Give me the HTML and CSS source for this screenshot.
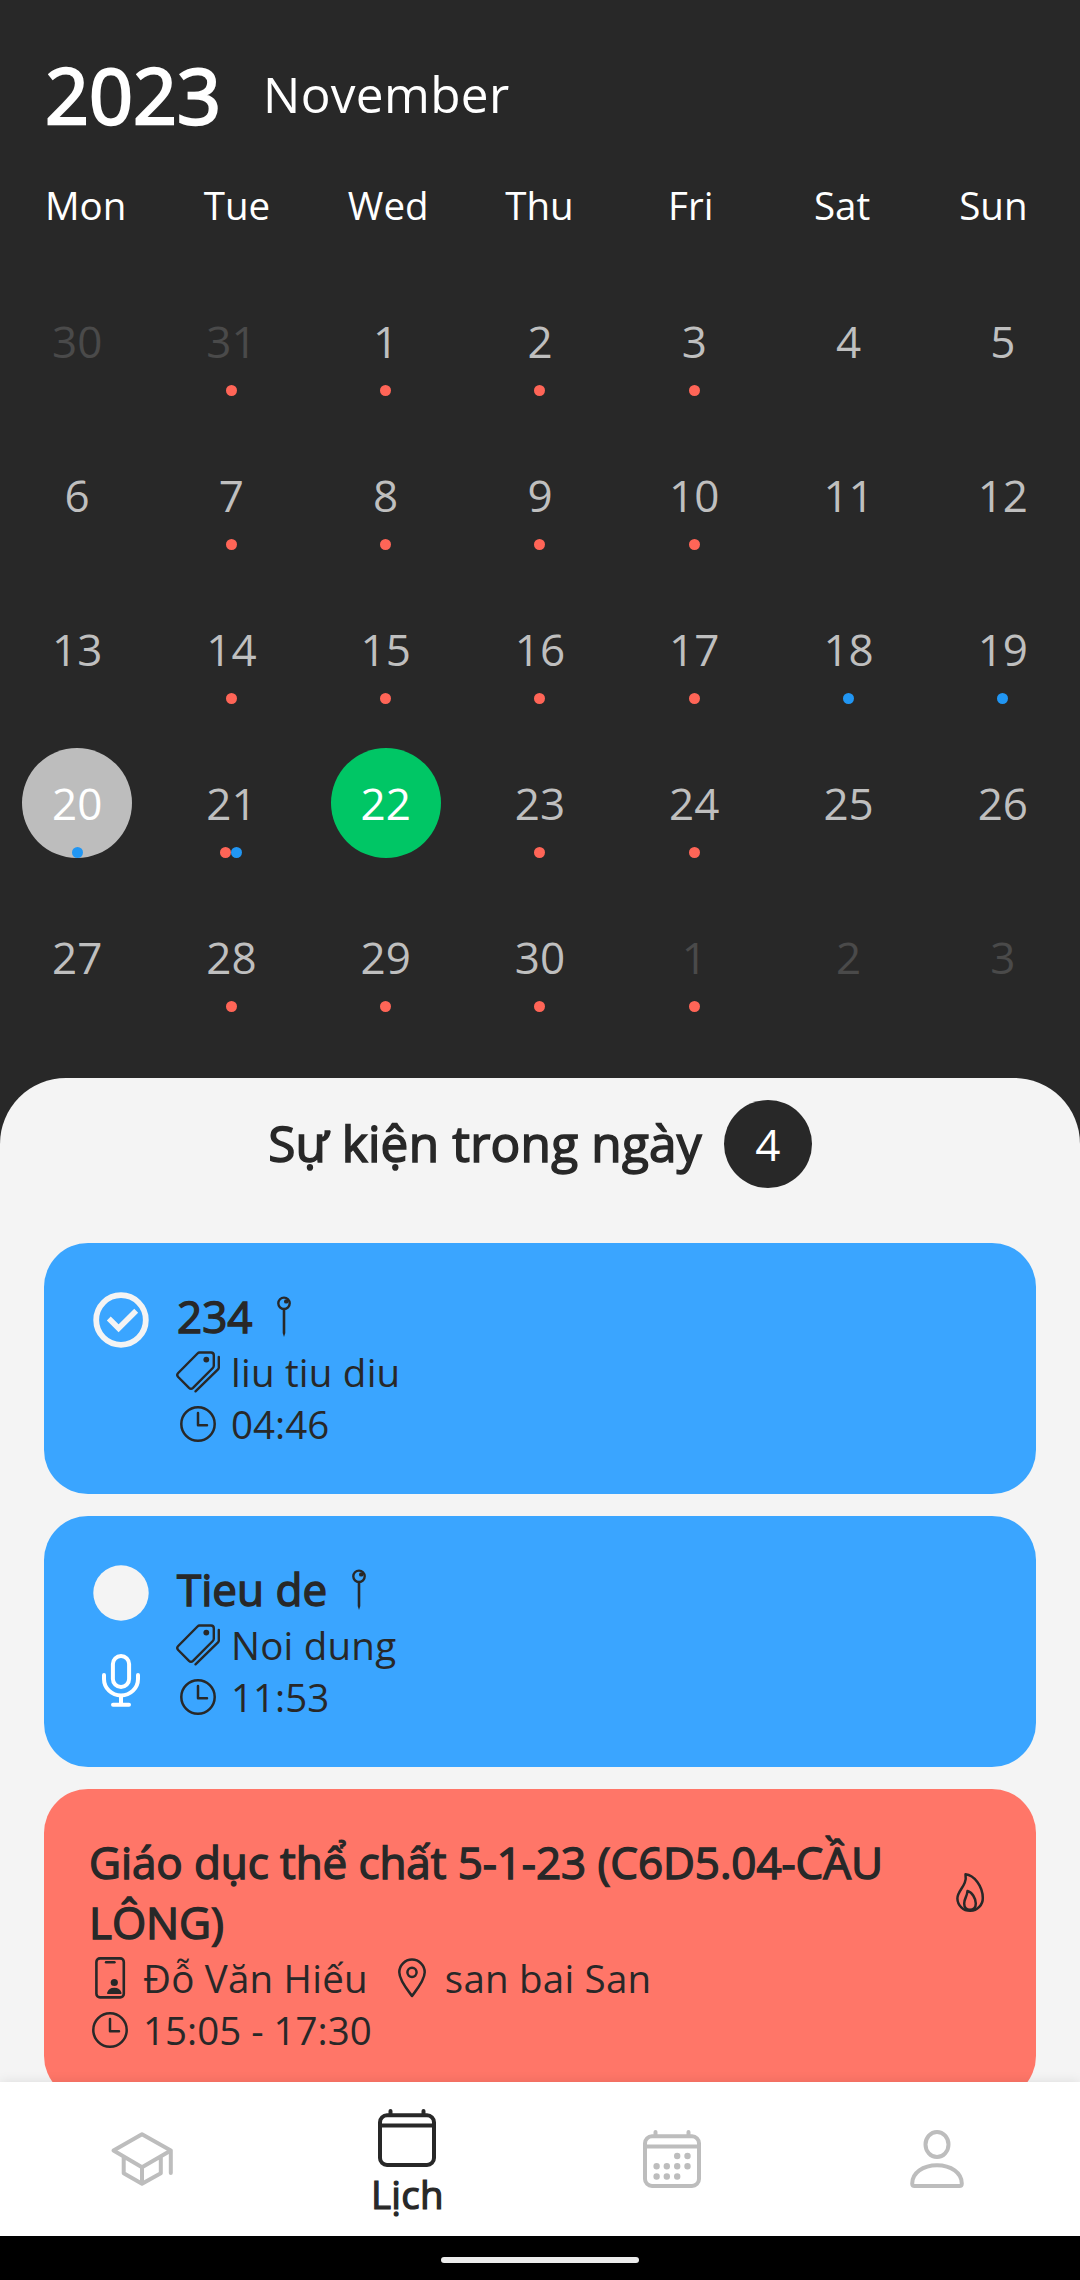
FILE: index.html
```html
<!DOCTYPE html>
<html lang="vi">
<head>
<meta charset="utf-8">
<title>Lịch</title>
<link rel="stylesheet" href="styles.css">
</head>
<body>
<svg class="defs" aria-hidden="true">
  <symbol id="i-pin" viewBox="0 0 44 44">
    <circle cx="22" cy="8.3" r="5.7" fill="none" stroke="currentColor" stroke-width="2.4"/>
    <circle cx="24.2" cy="6.4" r="2.2" fill="currentColor"/>
    <path d="M20.7 14h2.6v24l-1.3 4-1.3-4z" fill="currentColor"/>
  </symbol>
  <symbol id="i-tag" viewBox="0 0 44 44">
    <path d="M23.5 2.5H35Q37.8 2.5 37.8 5.3V15.500Q37.800 17 36.800 18L17 37.800Q15 39.700 13 37.800L2.200 27Q.3 25 2.200 23L21.500 3.500Q22.500 2.500 23.500 2.500Z" fill="none" stroke="currentColor" stroke-width="2.400"/>
    <circle cx="30.300" cy="9.600" r="2.900" fill="currentColor"/>
    <path d="M42.800 7v10.500q0 1-.8 1.800L19.500 41.300" fill="none" stroke="currentColor" stroke-width="2.400" stroke-linecap="round"/>
  </symbol>
  <symbol id="i-clock" viewBox="0 0 44 44">
    <circle cx="22" cy="22" r="16.700" fill="none" stroke="currentColor" stroke-width="2.500"/>
    <path d="M22 11v12.300h9" fill="none" stroke="currentColor" stroke-width="2.500" stroke-linecap="round" stroke-linejoin="round"/>
  </symbol>
  <symbol id="i-lecturer" viewBox="0 0 44 44">
    <rect x="8.400" y="2.400" width="27.400" height="39" rx="3.600" fill="none" stroke="currentColor" stroke-width="2.600"/>
    <path d="M18 6.300h8.500" stroke="currentColor" stroke-width="2.400" stroke-linecap="round"/>
    <circle cx="26.300" cy="26.500" r="3.600" fill="currentColor"/>
    <path d="M19.200 38v-1.500q1.400-4.700 7.100-4.700t7.100 4.700V38z" fill="currentColor"/>
  </symbol>
  <symbol id="i-place" viewBox="0 0 44 44">
    <path d="M22 40C20 37 9.300 25 9.300 16.300a12.700 12.700 0 0 1 25.400 0C34.700 25 24 37 22 40Z" fill="none" stroke="currentColor" stroke-width="2.500" stroke-linejoin="round"/>
    <circle cx="22" cy="16.300" r="4.600" fill="none" stroke="currentColor" stroke-width="2.500"/>
  </symbol>
  <symbol id="i-fire" viewBox="0 0 44 44">
    <path d="M17.500 3.200C26 4 34.800 15 34.800 27A12.700 12.600 0 0 1 9.400 27.500C9.400 19 19.500 15 17.500 3.200Z" fill="none" stroke="currentColor" stroke-width="2.500" stroke-linejoin="round"/>
    <path d="M19.500 20C24 21 27.800 27.500 27.800 32.500C27.800 37 25 38.800 22 38.800S16.200 37 16.200 32.500C16.200 27 19 26.500 19.500 20Z" fill="none" stroke="currentColor" stroke-width="2.500" stroke-linejoin="round"/>
  </symbol>
</svg>

<main class="app">
  <header class="heading">
    <span class="year">2023</span>
    <span class="month">November</span>
  </header>
  <div class="weekdays">
    <span>Mon</span><span>Tue</span><span>Wed</span><span>Thu</span><span>Fri</span><span>Sat</span><span>Sun</span>
  </div>
  <div class="days">
    <div class="day dim">30</div>
    <div class="day dim">31<span class="dots"><i class="dot"></i></span></div>
    <div class="day">1<span class="dots"><i class="dot"></i></span></div>
    <div class="day">2<span class="dots"><i class="dot"></i></span></div>
    <div class="day">3<span class="dots"><i class="dot"></i></span></div>
    <div class="day">4</div>
    <div class="day">5</div>

    <div class="day">6</div>
    <div class="day">7<span class="dots"><i class="dot"></i></span></div>
    <div class="day">8<span class="dots"><i class="dot"></i></span></div>
    <div class="day">9<span class="dots"><i class="dot"></i></span></div>
    <div class="day">10<span class="dots"><i class="dot"></i></span></div>
    <div class="day">11</div>
    <div class="day">12</div>

    <div class="day">13</div>
    <div class="day">14<span class="dots"><i class="dot"></i></span></div>
    <div class="day">15<span class="dots"><i class="dot"></i></span></div>
    <div class="day">16<span class="dots"><i class="dot"></i></span></div>
    <div class="day">17<span class="dots"><i class="dot"></i></span></div>
    <div class="day">18<span class="dots"><i class="dot note"></i></span></div>
    <div class="day">19<span class="dots"><i class="dot note"></i></span></div>

    <div class="day selected">20<span class="dots"><i class="dot note"></i></span></div>
    <div class="day">21<span class="dots"><i class="dot"></i><i class="dot note"></i></span></div>
    <div class="day today">22</div>
    <div class="day">23<span class="dots"><i class="dot"></i></span></div>
    <div class="day">24<span class="dots"><i class="dot"></i></span></div>
    <div class="day">25</div>
    <div class="day">26</div>

    <div class="day">27</div>
    <div class="day">28<span class="dots"><i class="dot"></i></span></div>
    <div class="day">29<span class="dots"><i class="dot"></i></span></div>
    <div class="day">30<span class="dots"><i class="dot"></i></span></div>
    <div class="day dim">1<span class="dots"><i class="dot"></i></span></div>
    <div class="day dim">2</div>
    <div class="day dim">3</div>
  </div>

  <section class="sheet">
    <div class="sheet-title">
      <h2>Sự kiện trong ngày</h2>
      <span class="count">4</span>
    </div>

    <article class="card">
      <div class="side">
        <svg class="icon-lg" viewBox="0 0 66 66">
          <circle cx="33" cy="33" r="24.800" fill="none" stroke="#f4f4f4" stroke-width="5.800"/>
          <path d="M20.800 31.500l9.800 9.800 17.600-17.600" fill="none" stroke="#f4f4f4" stroke-width="5.500"/>
        </svg>
      </div>
      <div class="body">
        <div class="title"><h3>234</h3><svg class="icon"><use href="#i-pin"/></svg></div>
        <div class="row"><svg class="icon"><use href="#i-tag"/></svg><span class="text">liu tiu diu</span></div>
        <div class="row"><svg class="icon"><use href="#i-clock"/></svg><span>04:46</span></div>
      </div>
    </article>

    <article class="card">
      <div class="side">
        <svg class="icon-lg" viewBox="0 0 66 66"><circle cx="33" cy="33" r="27.700" fill="#f4f4f4"/></svg>
        <svg class="icon-lg" viewBox="0 0 66 66" fill="none" stroke="#fff" stroke-width="4" stroke-linecap="round">
          <rect x="24.900" y="8" width="16.200" height="31" rx="8.100"/>
          <path d="M16 27v4a17 16.500 0 0 0 34 0v-4M33 48v8M25 56.800h16"/>
        </svg>
      </div>
      <div class="body">
        <div class="title"><h3>Tieu de</h3><svg class="icon"><use href="#i-pin"/></svg></div>
        <div class="row"><svg class="icon"><use href="#i-tag"/></svg><span class="text">Noi dung</span></div>
        <div class="row"><svg class="icon"><use href="#i-clock"/></svg><span>11:53</span></div>
      </div>
    </article>

    <article class="card lesson">
      <div class="body">
        <div class="lesson-head">
          <h3>Giáo dục thể chất 5-1-23 (C6D5.04-CẦU LÔNG)</h3>
          <svg class="icon"><use href="#i-fire"/></svg>
        </div>
        <div class="row">
          <svg class="icon"><use href="#i-lecturer"/></svg><span class="text">Đỗ Văn Hiếu</span>
          <svg class="icon place"><use href="#i-place"/></svg><span class="text">san bai San</span>
        </div>
        <div class="row"><svg class="icon"><use href="#i-clock"/></svg><span>15:05 - 17:30</span></div>
      </div>
    </article>
  </section>

  <nav class="tabs">
    <a class="tab">
      <svg class="icon-lg" viewBox="0 0 66 66" fill="none" stroke="currentColor" stroke-width="4" stroke-linejoin="round" stroke-linecap="round">
        <path d="M4.500 24.500L33 8.200l28.800 16.300L33 41.200zM14.700 31v16.200L33 57.800l18.800-10.600V31M33 41.200v16.600M61.800 24.500v22.500"/>
      </svg>
    </a>
    <a class="tab active">
      <svg class="icon-lg" viewBox="0 0 66 66" fill="none" stroke="currentColor" stroke-width="4" stroke-linecap="round">
        <rect x="6" y="10.300" width="54" height="49.700" rx="7"/>
        <path d="M6 20.500h54M16.500 6v4M49.500 6v4"/>
      </svg>
      <span>Lịch</span>
    </a>
    <a class="tab">
      <svg class="icon-lg" viewBox="0 0 66 66" fill="none" stroke="currentColor" stroke-width="4" stroke-linecap="round">
        <rect x="6" y="10.300" width="54" height="49.700" rx="7"/>
        <path d="M6 20.500h54M16.500 6v4M49.500 6v4"/>
        <path d="M38.200 30h.01M48.500 30h.01M17.600 40.200h.01M27.800 40.200h.01M38.200 40.200h.01M48.500 40.200h.01M17.600 50.500h.01M27.800 50.500h.01M38.200 50.500h.01" stroke-width="6.400"/>
      </svg>
    </a>
    <a class="tab">
      <svg class="icon-lg" viewBox="0 0 66 66" fill="none" stroke="currentColor" stroke-width="4">
        <ellipse cx="33" cy="18.500" rx="11.500" ry="12.500"/>
        <path d="M8.200 57.500C8.200 47 19 39.300 33 39.300S57.800 47 57.800 57.500Q57.800 60 55.300 60H10.700Q8.200 60 8.200 57.500Z"/>
      </svg>
    </a>
  </nav>
  <footer class="system"><div class="handle"></div></footer>
</main>
</body>
</html>
```
FILE: styles.css
```css
* { box-sizing: border-box; }

body {
  margin: 0;
  background: #282828;
  font-family: "Open Sans", "Noto Sans", sans-serif;
  font-size: 38.5px;
  line-height: 52px;
  color: #282828;
}

h2, h3 { margin: 0; font-weight: 400; }

svg { display: block; flex: none; }
.defs { display: none; }
.icon { width: 44px; height: 44px; }
.icon-lg { width: 66px; height: 66px; }

.app {
  width: 1080px;
  height: 2280px;
  display: flex;
  flex-direction: column;
  overflow: hidden;
}

.heading {
  display: flex;
  align-items: center;
  gap: 42px;
  height: 105px;
  margin-top: 42px;
  padding-left: 45px;
  color: #fff;
}
.year { font-size: 77px; line-height: 105px; -webkit-text-stroke: 2.4px #fff; }
.month { font-size: 49.5px; line-height: 67px; letter-spacing: .33px; }

.weekdays {
  display: grid;
  grid-template-columns: repeat(7, 1fr);
  margin-top: 32px;
  padding: 0 11px 0 10px;
  color: #fff;
  text-align: center;
}

.days {
  display: grid;
  grid-template-columns: repeat(7, 1fr);
  grid-auto-rows: 154px;
  place-items: center;
  margin-top: 33px;
}
.day {
  position: relative;
  width: 110px;
  height: 110px;
  border-radius: 50%;
  font-size: 44px;
  line-height: 110px;
  text-align: center;
  color: #bfbfbf;
}
.day.dim { color: #4a4a4a; }
.day.selected { background: #bdbdbd; color: #fff; }
.day.today { background: #00c665; color: #fff; }
.dots {
  position: absolute;
  left: 0;
  right: 0;
  bottom: 0;
  display: flex;
  justify-content: center;
}
.dot { width: 11px; height: 11px; border-radius: 50%; background: #ff6557; }
.dot.note { background: #2196f3; }

.sheet {
  flex: 1;
  min-height: 0;
  overflow: hidden;
  margin-top: 44px;
  padding: 22px 44px 0;
  display: flex;
  flex-direction: column;
  gap: 22px;
  border-radius: 66px 66px 0 0;
  background: #f4f4f4;
}
.sheet-title {
  flex: none;
  display: flex;
  justify-content: center;
  align-items: center;
  gap: 22px;
  height: 88px;
  margin-bottom: 33px;
}
.sheet-title h2 {
  padding-bottom: 2px;
  font-size: 49.5px;
  line-height: 67px;
  letter-spacing: .22px;
  -webkit-text-stroke: 1.55px #282828;
}
.count {
  width: 88px;
  height: 88px;
  border-radius: 50%;
  background: #282828;
  color: #fff;
  font-size: 44px;
  line-height: 88px;
  text-align: center;
}

.card {
  flex: none;
  display: flex;
  gap: 22px;
  padding: 44px;
  border-radius: 44px;
  background: #3aa5ff;
}
.card.lesson { background: #ff7668; }
.card h3 {
  padding-left: 1px;
  font-size: 44px;
  line-height: 60px;
  -webkit-text-stroke: 1.4px #282828;
}
.side { display: flex; flex-direction: column; gap: 22px; }
.body { flex: 1; }
.title { display: flex; align-items: center; gap: 10px; height: 59px; }
.title h3 { height: 61px; }
.row { display: flex; align-items: center; gap: 11px; height: 52px; }
.row .text { letter-spacing: .22px; }
.row .place { margin-left: 11px; }
.lesson-head { display: flex; align-items: center; justify-content: space-between; gap: 40px; height: 119px; }
.lesson-head h3 { height: 121px; letter-spacing: -.09px; }

.tabs {
  position: relative;
  display: grid;
  grid-template-columns: repeat(4, 1fr);
  height: 154px;
  padding: 0 10px 0 9px;
  background: #fff;
  box-shadow: 0 0 11px rgba(0, 0, 0, .1);
}
.tab {
  display: flex;
  flex-direction: column;
  align-items: center;
  justify-content: center;
  color: #bdbdbd;
}
.tab.active { padding: 3px 0 0 1px; color: #282828; }
.tab.active span { line-height: 46px; letter-spacing: .2px; -webkit-text-stroke: 1.2px #282828; }

.system { height: 44px; padding-top: 21px; background: #000; }
.handle { width: 198px; height: 6px; margin: 0 auto; border-radius: 3px; background: #ebebeb; }
```
